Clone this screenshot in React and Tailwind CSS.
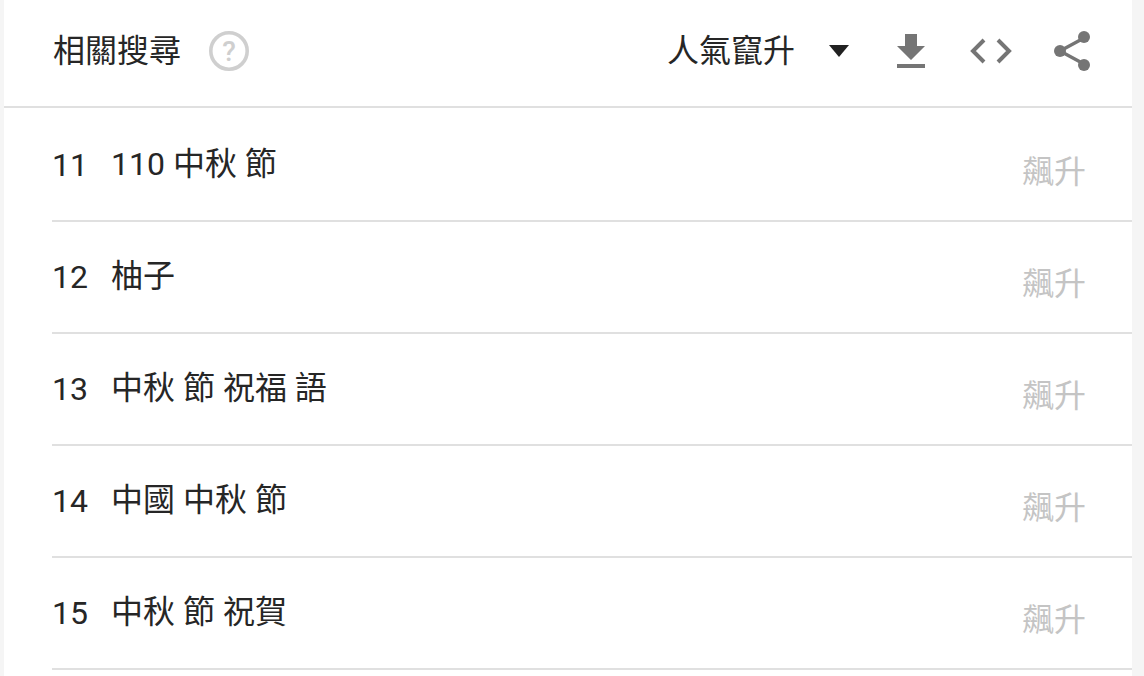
const rows = [
  { n: 11, label: "110 中秋 節" },
  { n: 12, label: "柚子" },
  { n: 13, label: "中秋 節 祝福 語" },
  { n: 14, label: "中國 中秋 節" },
  { n: 15, label: "中秋 節 祝賀" },
];

export default function App() {
  return (
    <div className="h-[676px] w-full overflow-hidden bg-[#f5f5f5] pl-[4px] pr-[12px] font-['Roboto','Noto_Sans_CJK_TC',sans-serif] text-[#262626]">
      <div className="h-full bg-white">
        {/* Header */}
        <div className="flex h-[108px] items-center border-b-2 border-[#e0e0e0] pb-[4px] pl-[49px] pr-[41px]">
          <h2 className="text-[32px] leading-none">相關搜尋</h2>
          <svg className="ml-[28px] h-[40px] w-[40px]" viewBox="0 0 40 40">
            <circle cx="20" cy="20" r="18.2" fill="none" stroke="#cfcfcf" strokeWidth="3.6" />
            <text x="20" y="30" textAnchor="middle" fontSize="28" fontWeight="500" fill="#cfcfcf" fontFamily="Roboto">?</text>
          </svg>
          <div className="flex-1" />
          <span className="text-[32px] leading-none">人氣竄升</span>
          <svg className="ml-[34px] h-[12px] w-[20px]" viewBox="0 0 20 12">
            <path d="M0 0h20L10 12z" fill="#212121" />
          </svg>
          <svg className="ml-[47px] h-[36px] w-[30px]" viewBox="0 0 30 36">
            <path d="M9 1h12v12h8L15 27 1 13h8z" fill="#757575" />
            <path d="M1 31h28v4H1z" fill="#757575" />
          </svg>
          <svg className="ml-[44px] h-[26px] w-[42px]" viewBox="0 0 42 26" fill="none" stroke="#757575" strokeWidth="4">
            <path d="M14 2 3 13l11 11" />
            <path d="M28 2l11 11-11 11" />
          </svg>
          <svg className="ml-[41px] h-[42px] w-[38px]" viewBox="0 0 38 42">
            <path d="M31 8 7 21l24 13" fill="none" stroke="#757575" strokeWidth="3.4" />
            <circle cx="31" cy="7" r="6" fill="#757575" />
            <circle cx="7" cy="21" r="6" fill="#757575" />
            <circle cx="31" cy="35" r="6" fill="#757575" />
          </svg>
        </div>

        {/* Rows */}
        <div className="pl-[48px] pt-[2px]">
          {rows.map((r) => (
            <div key={r.n} className="flex h-[112px] items-center border-b-2 border-[#e0e0e0] pr-[46px]">
              <span className="w-[36px] text-[32px] leading-none">{r.n}</span>
              <span className="ml-[23px] -mt-[2px] text-[32px] leading-none">{r.label}</span>
              <span className="ml-auto mt-[14px] text-[32px] leading-none text-[#c4c4c4]">飆升</span>
            </div>
          ))}
        </div>
      </div>
    </div>
  );
}
